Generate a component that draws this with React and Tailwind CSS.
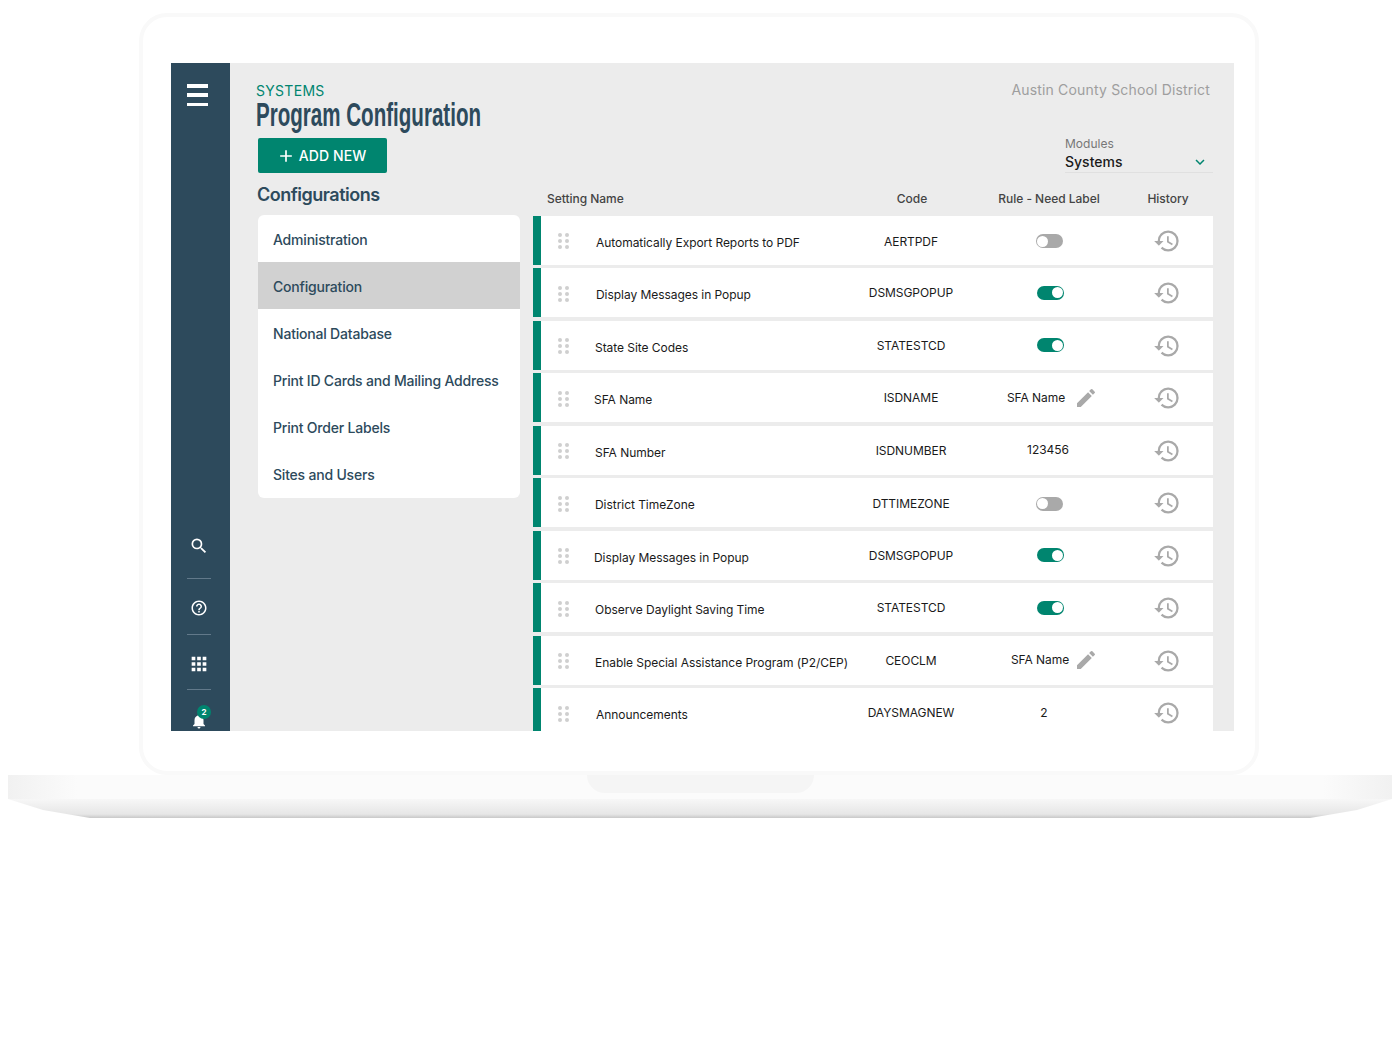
import React from "react";
import {
  MdSearch,
  MdHelpOutline,
  MdApps,
  MdNotifications,
  MdHistory,
  MdEdit,
  MdKeyboardArrowDown,
  MdAdd,
} from "react-icons/md";

const configurations = [
  "Administration",
  "Configuration",
  "National Database",
  "Print ID Cards and Mailing Address",
  "Print Order Labels",
  "Sites and Users",
];

const rows = [
  { name: "Automatically Export Reports to PDF", nameClass: "pl-[2px]", code: "AERTPDF", codeClass: "pt-[3px]", rule: "off" },
  { name: "Display Messages in Popup", nameClass: "pl-[2px]", code: "DSMSGPOPUP", rule: "on" },
  { name: "State Site Codes", nameClass: "pl-[1px]", code: "STATESTCD", rule: "on" },
  { name: "SFA Name", code: "ISDNAME", rule: "edit", ruleClass: "pl-[7px]", penClass: "ml-[9px]" },
  { name: "SFA Number", nameClass: "pl-[1px]", code: "ISDNUMBER", rule: "123456", ruleClass: "pr-[2px]" },
  { name: "District TimeZone", nameClass: "pl-[1px]", code: "DTTIMEZONE", codeClass: "pt-[3px]", rule: "off" },
  { name: "Display Messages in Popup", code: "DSMSGPOPUP", rule: "on" },
  { name: "Observe Daylight Saving Time", nameClass: "pl-[1px]", code: "STATESTCD", rule: "on" },
  { name: "Enable Special Assistance Program (P2/CEP)", nameClass: "pl-[1px]", code: "CEOCLM", rule: "edit", ruleClass: "pl-[11px]", penClass: "ml-[5px]" },
  { name: "Announcements", nameClass: "pl-[2px]", code: "DAYSMAGNEW", rule: "2", ruleClass: "pr-[10px]" },
];

function Toggle({ on }) {
  if (on) {
    return (
      <div className="flex h-[14px] w-[27px] items-center justify-end rounded-full bg-[#00856f] pr-[1px]">
        <div className="h-[11px] w-[11px] rounded-full bg-white" />
      </div>
    );
  }
  return (
    <div className="flex h-[14px] w-[27px] items-center rounded-full bg-[#a9a9a9] pl-[1px]">
      <div className="h-[11px] w-[11px] rounded-full bg-white" />
    </div>
  );
}

function Rule({ row }) {
  if (row.rule === "on") return <div className="pl-[2px]"><Toggle on /></div>;
  if (row.rule === "off") return <div className="pt-[2px]"><Toggle on={false} /></div>;
  if (row.rule === "edit") {
    return (
      <div className={`flex items-center ${row.ruleClass}`}>
        <span>SFA Name</span>
        <MdEdit className={`text-[#a9a9a9] ${row.penClass}`} size={24} />
      </div>
    );
  }
  return <span className={row.ruleClass}>{row.rule}</span>;
}

function GripDots() {
  return (
    <div className="grid w-[11px] grid-cols-2 gap-x-[3px] gap-y-[2px]">
      {[0, 1, 2, 3, 4, 5].map((i) => (
        <div key={i} className="h-[4px] w-[4px] rounded-full bg-[#cfcfcf]" />
      ))}
    </div>
  );
}

function SettingRow({ row }) {
  return (
    <div className="mb-[3.5px] flex h-[49px] shrink-0 items-center bg-white text-[12px] tracking-[-0.05px] text-[#1a1a1a]">
      <div className="h-full w-[8px] bg-[#00856f]" />
      <div className="w-[53px] pl-[17px] pt-[2px]">
        <GripDots />
      </div>
      <div className={`w-[257px] whitespace-nowrap pt-[5px] ${row.nameClass || ""}`}>{row.name}</div>
      <div className={`w-[120px] pt-[1px] text-center ${row.codeClass || ""}`}>{row.code}</div>
      <div className="flex w-[156px] justify-center">
        <Rule row={row} />
      </div>
      <div className="flex w-[80px] justify-center pt-[1px]">
        <MdHistory className="text-[#a9a9a9]" size={28} />
      </div>
    </div>
  );
}

function Divider({ className }) {
  return <div className={`h-px w-[24px] bg-[#62798a] ${className}`} />;
}

function Sidebar() {
  return (
    <div className="flex w-[59px] shrink-0 flex-col bg-[#2d4a5c] text-white">
      <div className="ml-[16px] mt-[21px] flex h-[22px] w-[21px] flex-col justify-between">
        <div className="h-[3.5px] bg-white" />
        <div className="h-[3.5px] bg-white" />
        <div className="h-[3.5px] bg-white" />
      </div>
      <div className="ml-[16px] mt-[430px] flex flex-col">
        <MdSearch className="ml-[2px]" size={20} />
        <Divider className="mt-[22px]" />
        <MdHelpOutline className="ml-[3px] mt-[20px]" size={18} />
        <Divider className="mt-[17px]" />
        <MdApps className="ml-[1px] mt-[18px]" size={22} />
        <Divider className="mt-[14px]" />
        <div className="relative mt-[22px] h-[18px] w-[24px]">
          <MdNotifications className="ml-[3px]" size={18} />
          <div className="absolute left-[10px] top-[-7px] flex h-[14px] w-[14px] items-center justify-center rounded-full bg-[#00856f] text-[8px] font-bold leading-none">
            2
          </div>
        </div>
      </div>
    </div>
  );
}

function LeftColumn() {
  return (
    <div className="w-[264px] shrink-0 pt-[18px]">
      <div className="h-[19px] text-[14px] leading-[20px] tracking-[0.3px] text-[#00856f]">SYSTEMS</div>
      <h1 className="h-[30px] origin-left scale-x-[0.623] whitespace-nowrap font-['Liberation_Sans',sans-serif] text-[33px] font-bold leading-[30px] text-[#2d4a5c]">
        Program Configuration
      </h1>
      <button className="ml-[2px] mt-[8px] flex h-[35px] w-[129px] items-center justify-center rounded-[2px] bg-[#00856f] pr-[3px] text-[14px] font-medium tracking-[0.1px] text-white">
        <MdAdd className="mr-[3px]" size={20} />
        ADD NEW
      </button>
      <h2 className="ml-px mt-[10px] h-[24px] text-[18px] font-semibold leading-[24px] tracking-[-0.5px] text-[#2d4a5c]">
        Configurations
      </h2>
      <div className="ml-[2px] mt-[8px] overflow-hidden rounded-[6px] bg-white">
        {configurations.map((item) => (
          <div
            key={item}
            className={`flex h-[47.17px] items-center pl-[15px] pt-[1px] text-[14px] font-medium tracking-[-0.2px] text-[#2d4a5c] ${
              item === "Configuration" ? "bg-[#d1d1d1]" : ""
            }`}
          >
            {item}
          </div>
        ))}
      </div>
    </div>
  );
}

function RightColumn() {
  return (
    <div className="ml-[13px] flex w-[680px] shrink-0 flex-col pt-[17px]">
      <div className="h-[20px] pr-[3px] text-right text-[14px] leading-[20px] tracking-[0.17px] text-[#9e9e9e]">
        Austin County School District
      </div>
      <div className="ml-[532px] mt-[36px] border-b border-[#e0e0e0]">
        <div className="h-[16px] text-[12px] leading-[16px] text-[#777777]">Modules</div>
        <div className="flex h-[20px] items-center justify-between pr-[4px] text-[14px] font-medium leading-[20px] text-[#1a1a1a]">
          Systems
          <MdKeyboardArrowDown className="text-[#00856f]" size={18} />
        </div>
      </div>
      <div className="mt-[18px] flex h-[16px] items-center text-[12px] font-medium leading-[16px] tracking-[-0.03px] text-[#444444]">
        <div className="w-[319px] pl-[14px]">Setting Name</div>
        <div className="w-[120px] text-center">Code</div>
        <div className="w-[154px] text-center">Rule - Need Label</div>
        <div className="w-[84px] text-center">History</div>
      </div>
      <div className="mt-[8.7px] flex flex-col">
        {rows.map((row, i) => (
          <SettingRow key={i} row={row} />
        ))}
      </div>
    </div>
  );
}

function LaptopBase() {
  return (
    <div className="ml-[8px] w-[1384px]">
      <div className="flex h-[24px] justify-center bg-[linear-gradient(90deg,#f1f1f1,#fbfbfb_5%,#fbfbfb_95%,#f1f1f1)]">
        <div className="h-[18px] w-[227px] rounded-b-[22px] bg-[#f5f5f5]" />
      </div>
      <div className="h-[19px] bg-[linear-gradient(180deg,#f7f7f7,#e6e6e6_80%,#c8c8c8)] [clip-path:polygon(0_0,100%_0,calc(100%-35px)_11px,calc(100%-82px)_19px,82px_19px,35px_11px)]" />
    </div>
  );
}

export default function App() {
  return (
    <div className="h-[1050px] w-[1400px] overflow-hidden bg-white pt-[13px] font-['Inter',sans-serif]">
      <div className="ml-[139px] h-[762px] w-[1120px] rounded-[28px] border-[4px] border-[#f9f9f9] pl-[28px] pt-[46px]">
        <div className="flex h-[668px] w-[1063px] overflow-hidden bg-[#ececec]">
          <Sidebar />
          <div className="flex flex-1 pl-[26px]">
            <LeftColumn />
            <RightColumn />
          </div>
        </div>
      </div>
      <LaptopBase />
    </div>
  );
}
